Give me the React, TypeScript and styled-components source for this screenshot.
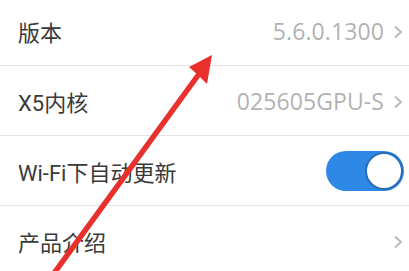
import React from "react";
import styled, { createGlobalStyle } from "styled-components";

const GlobalStyle = createGlobalStyle`
  html, body {
    margin: 0;
    padding: 0;
    background: #ffffff;
    overflow: hidden;
  }
  body {
    font-family: Roboto, "Noto Sans CJK SC", sans-serif;
  }
`;

const Page = styled.div`
  position: relative;
  width: 409px;
  height: 271px;
  overflow: hidden;
  background: #ffffff;
`;

const List = styled.div`
  display: flex;
  flex-direction: column;
  margin-top: -4px;
`;

const Row = styled.div`
  height: 69px;
  display: flex;
  align-items: center;
  justify-content: space-between;
  padding: 0 5px 0 18px;
  border-bottom: 1px solid #e4e4e4;
`;

const Label = styled.span`
  font-family: Roboto, "Noto Sans CJK SC", sans-serif;
  font-size: 22px;
  color: #3a3a3a;
  padding-top: 1px;
`;

const Right = styled.div`
  display: flex;
  align-items: center;
  gap: 10px;
`;

const Value = styled.span`
  font-family: "Open Sans", Roboto, sans-serif;
  font-size: 23px;
  color: #b2b2b2;
  padding-top: 1px;
  letter-spacing: 0.1px;
`;

const ChevronIcon = styled.svg`
  display: block;
  margin-top: 2px;
  margin-right: 1px;
`;

const Track = styled.div<{ $on: boolean }>`
  width: 78px;
  height: 40px;
  box-sizing: border-box;
  border-radius: 20px;
  padding: 1px;
  display: flex;
  align-items: center;
  justify-content: ${(p) => (p.$on ? "flex-end" : "flex-start")};
  background: ${(p) => (p.$on ? "#2e88e6" : "#d0d0d0")};
`;

const Knob = styled.div`
  width: 38px;
  height: 38px;
  box-sizing: border-box;
  border-radius: 50%;
  background: #ffffff;
  border: 2px solid #2a6cb8;
`;

const Overlay = styled.svg`
  position: absolute;
  left: 0;
  top: 0;
  pointer-events: none;
`;

const Chevron = () => (
  <ChevronIcon width="9" height="12" viewBox="0 0 9 12">
    <polyline
      points="1.5,1 7,6 1.5,11"
      fill="none"
      stroke="#b8b8b8"
      strokeWidth="1.8"
      strokeLinecap="round"
      strokeLinejoin="round"
    />
  </ChevronIcon>
);

const Toggle = ({ on }: { on: boolean }) => (
  <Track $on={on}>
    <Knob />
  </Track>
);

export default function App() {
  return (
    <Page>
      <GlobalStyle />
      <List>
        <Row>
          <Label>版本</Label>
          <Right>
            <Value>5.6.0.1300</Value>
            <Chevron />
          </Right>
        </Row>
        <Row>
          <Label>X5内核</Label>
          <Right>
            <Value>025605GPU-S</Value>
            <Chevron />
          </Right>
        </Row>
        <Row>
          <Label>Wi-Fi下自动更新</Label>
          <Toggle on={true} />
        </Row>
        <Row>
          <Label>产品介绍</Label>
          <Right>
            <Chevron />
          </Right>
        </Row>
      </List>
      <Overlay width="409" height="271" viewBox="0 0 409 271">
        <line
          x1="52"
          y1="276"
          x2="199"
          y2="74"
          stroke="#e8312c"
          strokeWidth="5.5"
          strokeLinecap="round"
        />
        <polygon points="212,55 207,84 199,76 189,67" fill="#e8312c" />
      </Overlay>
    </Page>
  );
}
